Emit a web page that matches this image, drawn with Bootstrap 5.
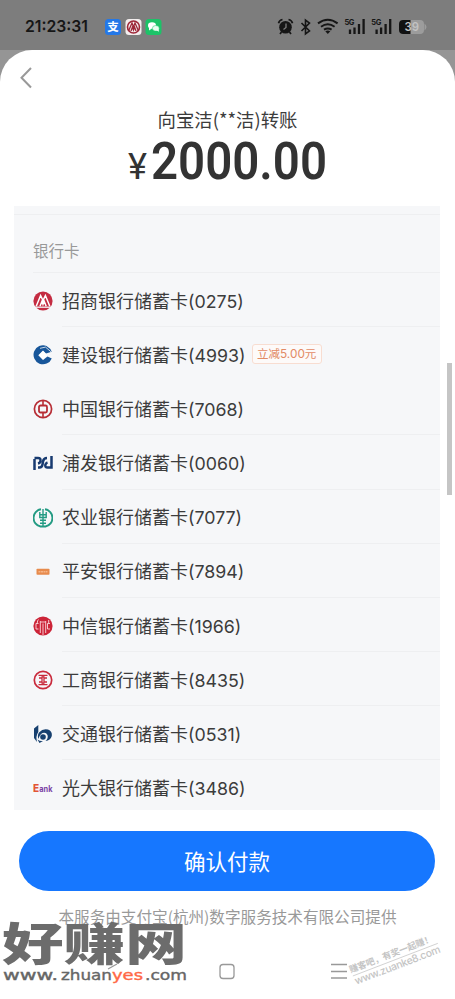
<!DOCTYPE html>
<html lang="zh-CN">
<head>
<meta charset="utf-8">
<meta name="viewport" content="width=device-width, initial-scale=1">
<title>确认付款</title>
<link href="https://cdn.jsdelivr.net/npm/bootstrap@5.3.0/dist/css/bootstrap.min.css" rel="stylesheet">
<style>
body{font-family:"Noto Sans CJK SC",sans-serif;background:#959595;color:#3c3c3c;overflow:hidden}
.phone{width:455px;height:999px}
.status{height:50px;background:#7d7d7d}
.sheet{height:949px;border-radius:32px 32px 0 0;background:#fff}
.back{height:49px;padding:15px 0 0 18px}
.payee{font-size:18.4px;line-height:26px;margin-top:7px}
.amount{height:50px}
.amount svg{overflow:visible}
.bank-panel{margin:24px 15px 0 14px;height:604px;background:#f6f7f9;padding-top:8px}
.panel-title{height:58px;margin-left:19px;padding-top:24px;font-size:15.5px;line-height:22px;color:#999;border-bottom:1px solid #eeeff1}
.panel-top{border-top:1px solid #eeeff1}
.bank-row{height:54.15px;padding-left:19px;font-size:18px}
.bank-row>svg{width:20px;height:20px;flex:none;margin-top:2px}
.bank-name{margin-left:9px;border-bottom:1px solid #eeeff1;padding-top:3px}
.no-line{border-bottom-color:transparent}
.num{font-family:Inter,sans-serif;font-size:17.8px;letter-spacing:0}
.off{font-size:11.5px;line-height:17px;color:#e28a65;border:1px solid #f8ddd1;border-radius:3px;padding:0 4.5px;margin-left:6px;margin-bottom:3px;background:#fdfaf9}
.off .num{font-size:11.8px}
.pay-btn{margin:21px 20px 0 19px;height:60px;background:#1677ff;font-size:21.5px}
.pay-btn:hover{background:#1677ff}
.note{font-size:15.6px;line-height:22px;color:#999;margin-top:14px;white-space:nowrap}
.scroll{left:447px;top:363px;width:5px;height:132px;background:#c5c5c5}
.overlay{left:0;top:895px}
</style>
<script src="https://cdn.jsdelivr.net/npm/bootstrap@5.3.0/dist/js/bootstrap.bundle.min.js"></script>
</head>
<body>
<div class="phone position-relative overflow-hidden">
<header class="status">
<svg width="455" height="50" viewBox="0 0 455 50" class="d-block">
<text x="25" y="32.300" font-family="Inter,sans-serif" font-weight="600" font-size="16.500" textLength="63" lengthAdjust="spacingAndGlyphs" fill="#161616">21:23:31</text>
<rect x="105" y="19" width="16" height="16" rx="3.500" fill="#2478e8"/><text x="107.300" y="31.300" font-size="11.500" font-weight="700" fill="#fff">支</text>
<rect x="125.500" y="19" width="16" height="16" rx="3.500" fill="#f3eeee"/>
<circle cx="133.500" cy="27" r="6" fill="none" stroke="#9d2638" stroke-width="1.600"/><path d="M128.500 31l3.500-8 1.500 4 1.500-4 3.500 8M131 31l1.500-4 1 3 1-3 1.500 4" fill="none" stroke="#9d2638" stroke-width="1.300"/>
<rect x="145.500" y="19" width="16" height="16" rx="3.500" fill="#1cc368"/>
<ellipse cx="152" cy="25.500" rx="4" ry="3.300" fill="#fff"/><path d="M149 27.500v3l3-2z" fill="#fff"/><ellipse cx="155.800" cy="28.300" rx="3.400" ry="2.800" fill="#e9fff2" stroke="#1cc368" stroke-width=".5"/><path d="M156 30l3 1.800-.5-3z" fill="#e9fff2"/>
<g fill="none" stroke="#161616">
<circle cx="285.500" cy="27.300" r="6.300" fill="#161616" stroke="none"/><path d="M278.500 23.200q.7-3 4-3.700M292.500 23.200q-.7-3-4-3.700M281.500 32l-1.500 2M289.500 32l1.500 2" stroke-width="1.700"/><path d="M286 23.500v4l-2.500 2" stroke="#7d7d7d" stroke-width="1.300"/>
<path d="M301.500 23l8 8-4 3V20l4 3-8 8" stroke-width="1.600"/>
<path d="M318 23.400q9.800-7.200 19.600 0M321 26.700q6.800-4.800 13.600 0M324 29.700q3.800-2.500 7.600 0" stroke-width="2"/><path d="M325.300 31.200q2.500-1.600 5 0l-2.500 2.800z" fill="#161616" stroke="none"/>
<path d="M350 29.500V34M354.500 27.500V34M359 24V34M363.600 19V34M376.600 29.500V34M381.100 27.500V34M385.600 24V34M390.200 19V34" stroke-width="2.300"/>
</g>
<g font-family="Inter,sans-serif" font-size="7.500" font-weight="700" fill="#161616"><text x="344.500" y="24.600" textLength="10">5G</text><text x="371.300" y="24.600" textLength="10">5G</text></g>
<rect x="399" y="20" width="25" height="14" rx="4" fill="#9c9c9c"/><path d="M403 20h7.500v14H403q-4 0-4-4v-6q0-4 4-4z" fill="#111"/><path d="M424.500 23.500q4 3.500 0 7z" fill="#9c9c9c"/>
<text x="404.500" y="31.300" font-family="Inter,sans-serif" font-size="12" font-weight="600" fill="#c2c2c2" textLength="14.500" lengthAdjust="spacingAndGlyphs">39</text>
</svg>
</header>
<main class="sheet">
<div class="back"><svg class="d-block" width="16" height="25" viewBox="0 0 16 25"><path d="M13 3L3.500 12.700 13 22.500" fill="none" stroke="#999" stroke-width="2"/></svg></div>
<div class="payee text-center">向宝洁(**洁)转账</div>
<div class="amount"><svg class="d-block" width="455" height="50" viewBox="0 132 455 50">
<text x="128" y="178.500" font-family="Roboto,sans-serif" font-size="36" font-weight="400" fill="#333" textLength="19" lengthAdjust="spacingAndGlyphs">¥</text>
<text x="151" y="179.300" font-family="Roboto,sans-serif" font-size="52" font-weight="600" fill="#333" textLength="176" lengthAdjust="spacingAndGlyphs">2000.00</text></svg></div>
<section class="bank-panel overflow-hidden">
<div class="panel-top"></div>
<div class="panel-title">银行卡</div>
<div class="bank-row d-flex align-items-center"><svg viewBox="0 0 20 20"><circle cx="10" cy="10" r="9.600" fill="#c42c42"/><path d="M3.200 15.300L7.600 4.500 10 9.500l2.400-5 4.400 10.800M7 15.300l2-5 1 3 1.200-3 2 5" fill="none" stroke="#fff" stroke-width="1.500"/><path d="M2 16.200h16" stroke="#f6f7f9" stroke-width="1.300"/></svg><div class="bank-name d-flex align-items-center flex-fill h-100"><span>招商银行储蓄卡<span class="num">(0275)</span></span></div></div>
<div class="bank-row d-flex align-items-center"><svg viewBox="0 0 20 20"><path d="M13.500 1A9.500 9.500 0 1 0 18.800 13.500L14.500 11.500 10 15 5.300 10.300 10 5.600 13 8.600 18.700 6.800Q17.500 3.200 13.500 1z" fill="#17569a"/><path d="M7 3.300l5.500-1.200 5.500 4.700" fill="none" stroke="#f6f7f9" stroke-width=".8"/><path d="M10 6l4.200 4.200-4.200 4.200-4.200-4.200z" fill="#fff"/></svg><div class="bank-name no-line d-flex align-items-center flex-fill h-100"><span>建设银行储蓄卡<span class="num">(4993)</span></span><span class="off">立减<span class="num">5.00</span>元</span></div></div>
<div class="bank-row d-flex align-items-center"><svg viewBox="0 0 20 20" fill="none" stroke="#b72d35"><circle cx="10" cy="10" r="8.600" stroke-width="1.700"/><rect x="6" y="6.500" width="8" height="7" rx="1.500" stroke-width="1.800"/><path d="M10 1.500v5M10 13.500v5" stroke-width="1.600"/></svg><div class="bank-name d-flex align-items-center flex-fill h-100"><span>中国银行储蓄卡<span class="num">(7068)</span></span></div></div>
<div class="bank-row d-flex align-items-center"><svg viewBox="0 0 20 20" fill="none" stroke="#173a70" stroke-width="2.500"><path d="M1.500 17V6M1.500 5H5Q7.800 5 7.500 7.800Q7.200 10 5 10.500M5 14.500H6.500Q9 14.500 9.500 11.500L10 8.500Q10.600 5 14 5M18.500 3V14.500H14.500Q12 14.500 12.300 12Q12.600 10 14.500 9.300"/></svg><div class="bank-name d-flex align-items-center flex-fill h-100"><span>浦发银行储蓄卡<span class="num">(0060)</span></span></div></div>
<div class="bank-row d-flex align-items-center"><svg viewBox="0 0 20 20" fill="none" stroke="#239b83"><path d="M8 1.200A8.800 8.800 0 0 0 7.500 18.500H12.500A8.800 8.800 0 0 0 12 1.200" stroke-width="1.900"/><path d="M10 1V18.500M6.800 4V9.500H13.200V4M6.800 6.700H13.200M7 12.300H13M7 15.200H13" stroke-width="1.400"/></svg><div class="bank-name d-flex align-items-center flex-fill h-100"><span>农业银行储蓄卡<span class="num">(7077)</span></span></div></div>
<div class="bank-row d-flex align-items-center"><svg viewBox="0 0 20 20"><rect x="3.500" y="6.700" width="13" height="6" rx=".8" fill="#e78b4d"/><path d="M5.500 9.700h9" stroke="#f6b487" stroke-width="1.500" stroke-dasharray="2 .5"/></svg><div class="bank-name d-flex align-items-center flex-fill h-100"><span>平安银行储蓄卡<span class="num">(7894)</span></span></div></div>
<div class="bank-row d-flex align-items-center"><svg viewBox="0 0 20 20"><circle cx="10" cy="10" r="9.600" fill="#cc2438"/><path d="M5.500 3.500Q4.300 4.500 4.300 7M5.500 7.500H3V13H5.500M7.300 5V17M10 7.500V19M12.700 5V17M7.500 6H12.500M17 7.500H14.500V13H17M15.700 4V7" fill="none" stroke="#fbdade" stroke-width=".9"/></svg><div class="bank-name d-flex align-items-center flex-fill h-100"><span>中信银行储蓄卡<span class="num">(1966)</span></span></div></div>
<div class="bank-row d-flex align-items-center"><svg viewBox="0 0 20 20" fill="none" stroke="#c92a3c"><circle cx="10" cy="10" r="8.700" stroke-width="1.700"/><path d="M5.500 5.300H14.500M6 8H9V10M14 8H11V10M6 12H9V10M14 12H11V10M5.500 14.700H14.500M9.200 5V8M10.800 5V8M9.200 12V15M10.800 12V15" stroke-width="1.300"/></svg><div class="bank-name d-flex align-items-center flex-fill h-100"><span>工商银行储蓄卡<span class="num">(8435)</span></span></div></div>
<div class="bank-row d-flex align-items-center"><svg viewBox="0 0 20 20" fill="#17406f"><path d="M5.300 1L1 4.500V14l3 4Q2.500 12 5.300 8z"/><path d="M6 8.500Q10 4 15 5.500Q19.500 7.300 18.800 12Q17.500 16.500 12.500 17Q15.500 14.500 14.500 11Q13 7.800 9.500 9Q6.500 10.500 5.500 15Q4 11.500 6 8.500z"/><circle cx="10" cy="13" r="2.800"/><path d="M4.500 15.500Q7 17.500 10 17L6.500 19z"/></svg><div class="bank-name d-flex align-items-center flex-fill h-100"><span>交通银行储蓄卡<span class="num">(0531)</span></span></div></div>
<div class="bank-row d-flex align-items-center"><svg viewBox="0 0 20 20" font-family="Inter,sans-serif" font-weight="800"><text x="0" y="13.500" font-size="10" fill="#e25536">E</text><text x="6.300" y="13.500" font-size="8.500" font-weight="700" fill="#7b3fa5" textLength="13.200" lengthAdjust="spacingAndGlyphs">ank</text></svg><div class="bank-name no-line d-flex align-items-center flex-fill h-100"><span>光大银行储蓄卡<span class="num">(3486)</span></span></div></div>
</section>
<div class="d-flex"><button class="btn pay-btn rounded-pill border-0 text-white flex-fill p-0">确认付款</button></div>
<div class="note text-center">本服务由支付宝(杭州)数字服务技术有限公司提供</div>
</main>
<div class="scroll position-absolute"></div>
<svg class="overlay position-absolute" width="455" height="104" viewBox="0 895 455 104">
<rect x="220" y="964.500" width="14" height="14" rx="3" fill="none" stroke="#999" stroke-width="1.300"/>
<path d="M331 964.500h16M331 971.500h16M331 978h16M108 969l9-5" stroke="#999" stroke-width="1.300"/>
<text transform="translate(2 960.500) scale(1.400 1)" font-size="45" font-weight="900" fill="#6c6c6c" textLength="132" lengthAdjust="spacingAndGlyphs">好赚网</text>
<g font-family="'DejaVu Sans',sans-serif" font-size="14.500" fill="#666" stroke="#666" stroke-width=".4"><text x="3" y="979.500" textLength="55" lengthAdjust="spacingAndGlyphs">www.</text><text x="61" y="979.500" textLength="51" lengthAdjust="spacingAndGlyphs">zhuan</text><text x="112" y="979.500" textLength="31" lengthAdjust="spacingAndGlyphs" fill="#ff6846" stroke="#ff6846">yes</text><text x="145" y="979.500" textLength="42" lengthAdjust="spacingAndGlyphs">.com</text></g>
<g transform="translate(351 974) rotate(-21)" fill="#c4c4c4"><text x="0" y="-1" font-size="9" font-weight="700" textLength="89" lengthAdjust="spacingAndGlyphs">赚客吧，有奖一起赚！</text><path d="M1 2.500H92" stroke="#ccc" stroke-width=".8"/><text x="1" y="12" font-family="Inter,sans-serif" font-size="10.500" font-weight="500" textLength="91">www.zuanke8.com</text></g>
</svg>
</div>
</body>
</html>
